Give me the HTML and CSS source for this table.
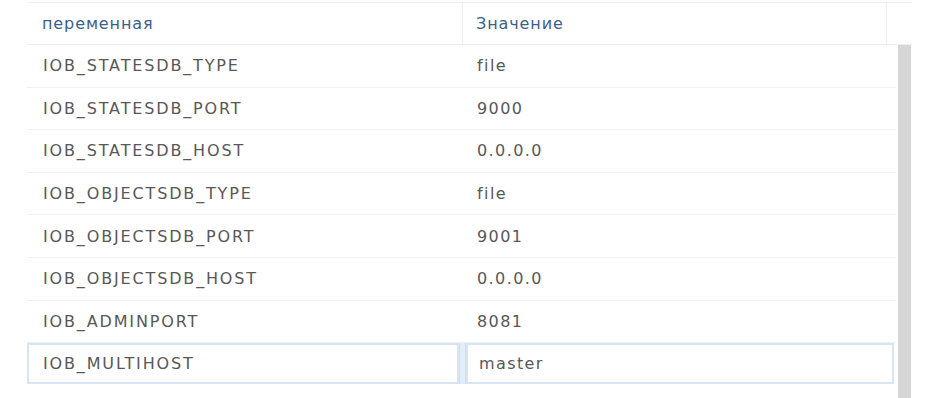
FILE: index.html
```html
<!DOCTYPE html>
<html>
<head>
<meta charset="utf-8">
<link rel="stylesheet" href="styles.css">
</head>
<body>
<div class="table">
  <div class="head">
    <div class="hcell c1">переменная</div>
    <div class="hcell c2">Значение</div>
    <div class="hcell c3"></div>
  </div>
  <div class="bodywrap">
    <div class="rows">
      <div class="row"><div class="cell c1">IOB_STATESDB_TYPE</div><div class="cell c2">file</div></div>
      <div class="row"><div class="cell c1">IOB_STATESDB_PORT</div><div class="cell c2">9000</div></div>
      <div class="row"><div class="cell c1">IOB_STATESDB_HOST</div><div class="cell c2">0.0.0.0</div></div>
      <div class="row"><div class="cell c1">IOB_OBJECTSDB_TYPE</div><div class="cell c2">file</div></div>
      <div class="row"><div class="cell c1">IOB_OBJECTSDB_PORT</div><div class="cell c2">9001</div></div>
      <div class="row"><div class="cell c1">IOB_OBJECTSDB_HOST</div><div class="cell c2">0.0.0.0</div></div>
      <div class="row"><div class="cell c1">IOB_ADMINPORT</div><div class="cell c2">8081</div></div>
      <div class="row sel"><div class="cell c1 edit">IOB_MULTIHOST</div><div class="gap"></div><div class="cell c2 edit">master</div></div>
    </div>
    <div class="scroll"></div>
  </div>
</div>
</body>
</html>
```
FILE: styles.css
```css
html, body { margin: 0; padding: 0; background: #fff; }
body { font-family: "DejaVu Sans", Verdana, sans-serif; font-size: 16px; letter-spacing: 1.4px; color: #585858; overflow: hidden; height: 398px; }
.table { margin: 2px 0 0 27px; width: 885px; }
.head { display: flex; height: 41px; border-top: 1px solid #eef0f2; border-bottom: 1px solid #eef0f2; }
.hcell { color: #3b5f8c; display: flex; align-items: center; padding-left: 15px; box-sizing: border-box; letter-spacing: 0.9px; }
.hcell.c1 { width: 436px; border-right: 1px solid #eef0f2; }
.hcell.c2 { width: 424px; padding-left: 13px; border-right: 1px solid #eef0f2; }
.hcell.c3 { flex: 1; }
.bodywrap { display: flex; }
.rows { width: 869px; }
.row { display: flex; height: 42.6px; box-sizing: border-box; border-bottom: 1px solid #f0f1f3; }
.cell { display: flex; align-items: center; box-sizing: border-box; }
.cell.c1 { width: 436px; padding-left: 16px; letter-spacing: 1.85px; }
.cell.c2 { flex: 1; padding-left: 14px; }
.row.sel { border-bottom: none; height: 41px; }
.cell.edit { border: 2px solid #d6e4f3; }
.cell.c1.edit { width: 432px; padding-left: 14px; }
.gap { width: 7px; background: #e3edf8; border-left: 1px solid #d0dff0; border-right: 1px solid #d0dff0; box-sizing: border-box; }
.cell.c2.edit { padding-left: 11px; margin-right: 2px; }
.scroll { width: 13px; margin-left: 2px; background: #d6d6d6; height: 360px; }
```
